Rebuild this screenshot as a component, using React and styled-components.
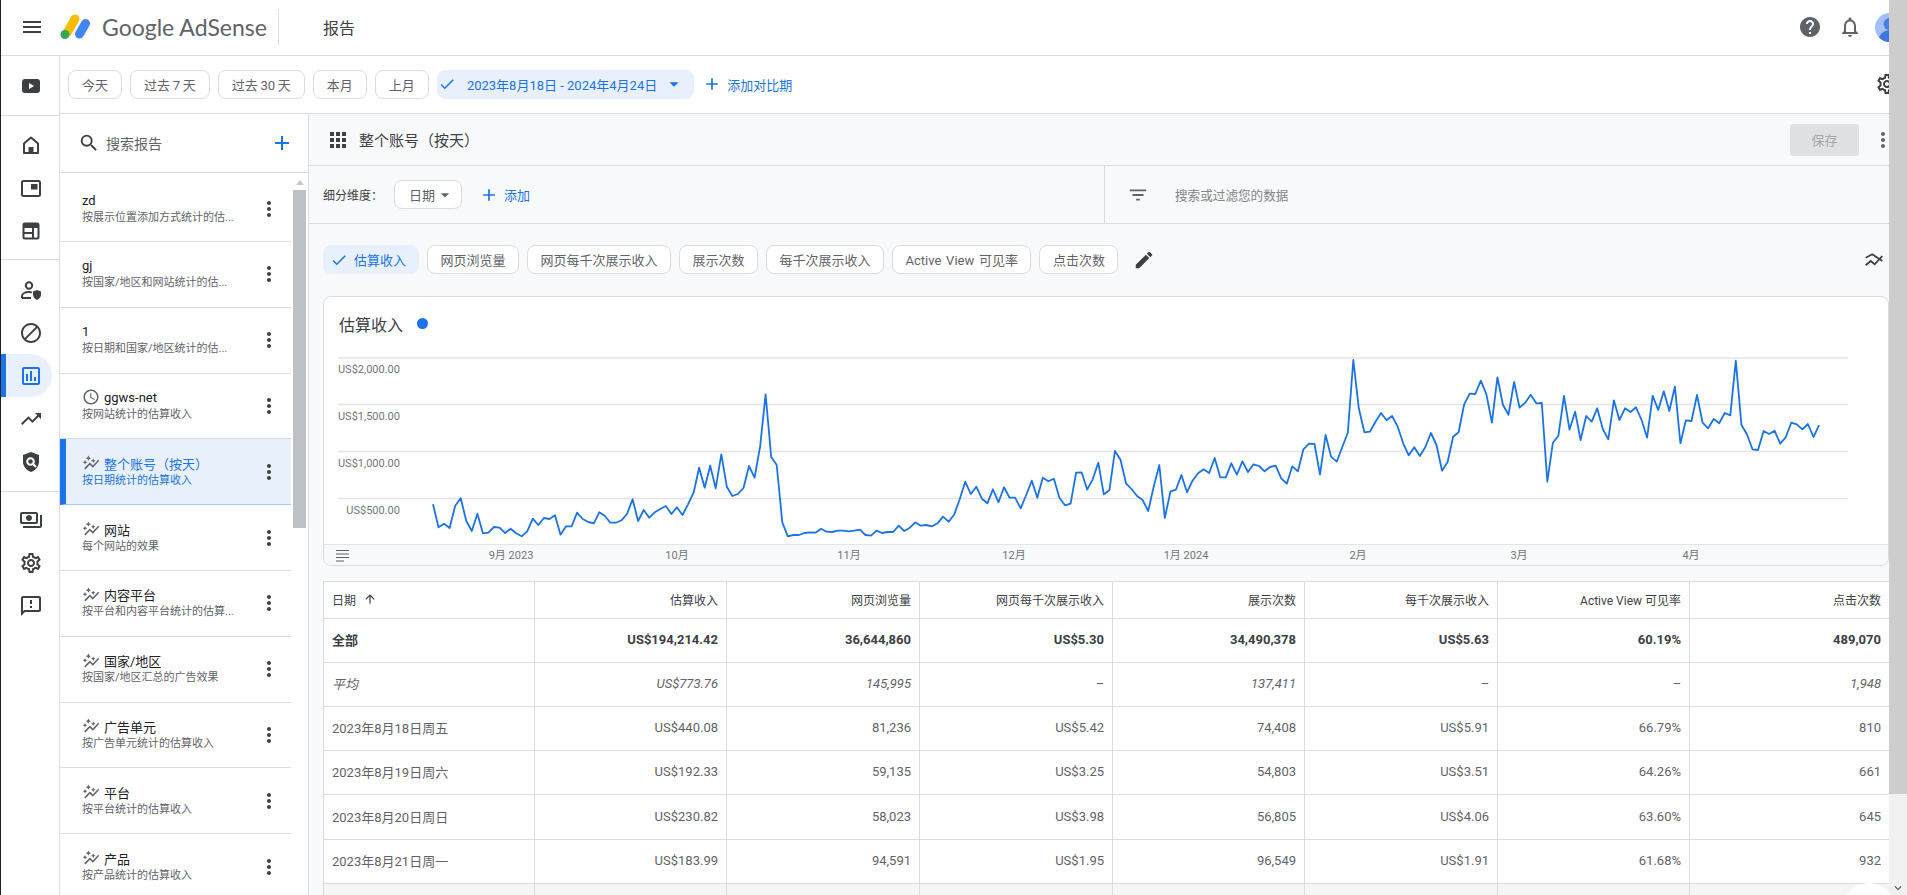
import styled, { createGlobalStyle } from 'styled-components';
import {
  MdMenu, MdHelp, MdNotificationsNone, MdOutlineBlock, MdOutlineAssessment, MdTrendingUp,
  MdOutlinePayments, MdOutlineSettings, MdOutlineFeedback, MdSearch, MdAdd, MdCheck, MdArrowDropDown,
  MdMoreVert, MdFilterList, MdCreate, MdOutlineSchedule, MdAutoGraph, MdApps, MdArrowUpward, MdKeyboardArrowDown,
} from 'react-icons/md';

const GlobalStyle = createGlobalStyle`
  html, body {
    margin: 0;
    height: 100%;
    overflow: hidden;
    background: #fff;
    font-family: Roboto, "Noto Sans CJK SC", sans-serif;
    color: #3c4043;
  }
  * { box-sizing: border-box; }
`;

const Page = styled.div`
  display: flex;
  height: 895px;
  border-left: 1px solid #202124;
  position: relative;
  overflow: hidden;
`;
const Viewport = styled.div`
  width: 1888px;
  overflow: hidden;
`;
const Frame = styled.div`
  width: 1906px;
  display: flex;
  flex-direction: column;
`;
const PageScroll = styled.div`
  width: 18px;
  flex: none;
  background: #f1f1f1;
  display: flex;
  flex-direction: column;
  justify-content: space-between;
  align-items: center;
  color: #505050;
`;
const PageThumb = styled.div`
  width: 100%;
  height: 794px;
  background: #cdcdcd;
`;
const Fab = styled.div`
  position: absolute;
  right: 12px;
  bottom: -40px;
  width: 52px;
  height: 52px;
  border-radius: 50%;
  background: #fff;
`;

/* top bar */
const TopBar = styled.header`
  height: 56px;
  flex: none;
  display: flex;
  align-items: center;
  padding: 0 3px 1px 19px;
  border-bottom: 1px solid #dadce0;
  color: #3c4043;
`;
const LogoBox = styled.div`
  display: flex;
  margin-left: 16px;
`;
const Wordmark = styled.div`
  margin-left: 11px;
  font-family: Lato, Roboto, sans-serif;
  font-size: 23px;
  color: #5f6368;
  white-space: nowrap;
  width: 156px;
`;
const TopDivider = styled.div`
  width: 1px;
  height: 36px;
  margin: 0 44px 0 20px;
  background: #dadce0;
`;
const PageTitle = styled.div`
  font-size: 16px;
  color: #3c4043;
`;
const TopIcons = styled.div`
  margin-left: auto;
  display: flex;
  align-items: center;
  gap: 16px;
  color: #5f6368;
`;
const AvatarBox = styled.div`
  display: flex;
  margin-left: -3px;
`;

/* left rail */
const Body = styled.div`
  display: flex;
  height: 839px;
`;
const Rail = styled.nav`
  width: 59px;
  flex: none;
  border-right: 1px solid #dadce0;
`;
const RailGroup = styled.div`
  padding: ${(p) => p.$pad};
  border-bottom: ${(p) => (p.$last ? 'none' : '1px solid #dadce0')};
`;
const RailItem = styled.div`
  width: 51px;
  height: ${(p) => p.$h || 43}px;
  display: flex;
  align-items: center;
  padding-left: 18px;
  color: ${(p) => (p.$active ? '#1a73e8' : '#3c4043')};
  background: ${(p) => (p.$active ? '#e8f0fe' : 'transparent')};
  border-radius: 0 22px 22px 0;
  box-shadow: ${(p) => (p.$active ? 'inset 5px 0 0 #1a73e8' : 'none')};
`;

const Content = styled.div`
  flex: 1;
  min-width: 0;
  display: flex;
  flex-direction: column;
`;
const Toolbar = styled.div`
  height: 58px;
  flex: none;
  display: flex;
  align-items: center;
  gap: 8px;
  padding: 0 8px 1px 8px;
  border-bottom: 1px solid #dadce0;
`;
const Chip = styled.div`
  height: 29px;
  flex: none;
  display: inline-flex;
  align-items: center;
  padding: 0 13px;
  border: 1px solid ${(p) => (p.$active ? '#e8f0fe' : '#dadce0')};
  border-radius: 8px;
  background: ${(p) => (p.$active ? '#e8f0fe' : '#fff')};
  color: ${(p) => (p.$active ? '#1a73e8' : '#5f6368')};
  font-size: 13px;
  white-space: nowrap;
  word-spacing: -0.5px;
  svg { flex: none; }
`;
const CheckChip = styled(Chip)`
  padding: 0 12px 0 6px;
  gap: 6px;
`;
const DateChip = styled(Chip)`
  padding: 0 8px 0 0;
  gap: 11px;
  word-spacing: 0;
  svg:last-child { margin-left: -5px; }
`;
const LinkButton = styled.div`
  display: inline-flex;
  align-items: center;
  gap: 5px;
  margin-left: ${(p) => p.$left || 0}px;
  color: #1a73e8;
  font-size: 13px;
  white-space: nowrap;
`;
const RightIcon = styled.div`
  margin-left: auto;
  display: flex;
  color: #3c4043;
`;

const Columns = styled.div`
  flex: 1;
  min-height: 0;
  display: flex;
`;

/* saved report list */
const Panel = styled.aside`
  width: 249px;
  flex: none;
  border-right: 1px solid #dadce0;
  display: flex;
  flex-direction: column;
  overflow: hidden;
`;
const PanelSearch = styled.div`
  height: 59px;
  flex: none;
  display: flex;
  align-items: center;
  padding: 0 14px 0 18px;
  gap: 6px;
  border-bottom: 1px solid #dadce0;
  color: #3c4043;
`;
const SearchText = styled.span`
  flex: 1;
  font-size: 14px;
  color: #5f6368;
`;
const PanelBody = styled.div`
  flex: 1;
  min-height: 0;
  display: flex;
`;
const ReportList = styled.div`
  width: 231px;
  flex: none;
  padding-top: 3.2px;
`;
const ReportRow = styled.div`
  height: 65.8px;
  display: flex;
  align-items: center;
  padding-left: ${(p) => (p.$active ? 16 : 22)}px;
  padding-right: 10px;
  background: ${(p) => (p.$active ? '#e8f0fb' : '#fff')};
  border-left: ${(p) => (p.$active ? '6px solid #1a73e8' : 'none')};
  border-bottom: 1px solid ${(p) => (p.$active ? '#a8c7fa' : '#dadce0')};
  color: ${(p) => (p.$active ? '#1a73e8' : '#3c4043')};
`;
const ReportText = styled.div`
  flex: 1;
  min-width: 0;
`;
const ReportTitle = styled.div`
  display: flex;
  align-items: center;
  gap: 4px;
  height: 17px;
  margin: -1px 0 1px;
  font-size: 13px;
  color: ${(p) => (p.$active ? '#1a73e8' : '#202124')};
  svg { color: #5f6368; flex: none; }
`;
const ReportSub = styled.div`
  font-size: 11px;
  line-height: 15px;
  color: ${(p) => (p.$active ? '#1a73e8' : '#5f6368')};
  white-space: nowrap;
`;
const ListTrack = styled.div`
  flex: 1;
  padding: 7px 2px 0;
`;
const UpArrow = styled.div`
  width: 0;
  height: 0;
  margin: 0 auto 5px;
  border: 4px solid transparent;
  border-top: none;
  border-bottom: 5px solid #c4c7cb;
`;
const ListThumb = styled.div`
  width: 13px;
  height: 338px;
  background: #bdc1c6;
`;

/* report area */
const Main = styled.main`
  flex: 1;
  min-width: 0;
  background: #f8f9fa;
  display: flex;
  flex-direction: column;
`;
const ReportHeader = styled.div`
  height: 52px;
  flex: none;
  display: flex;
  align-items: center;
  padding: 0 12px 0 17px;
  border-bottom: 1px solid #dadce0;
  color: #3c4043;
`;
const ReportName = styled.h1`
  margin: 0 0 0 9px;
  font-size: 15px;
  font-weight: 400;
  color: #3c4043;
`;
const SaveButton = styled.div`
  margin-left: auto;
  width: 69px;
  height: 32px;
  display: flex;
  align-items: center;
  justify-content: center;
  margin-right: 12px;
  border-radius: 3px;
  background: #e0e1e3;
  color: #a4a6a9;
  font-size: 13px;
`;
const FilterRow = styled.div`
  height: 58px;
  flex: none;
  display: flex;
  border-bottom: 1px solid #dadce0;
`;
const BreakdownCell = styled.div`
  width: 796px;
  flex: none;
  display: flex;
  align-items: center;
  padding-left: 14px;
  border-right: 1px solid #dadce0;
`;
const BreakdownLabel = styled.span`
  width: 71px;
  font-size: 12px;
  color: #3c4043;
`;
const DateSelect = styled(Chip)`
  width: 68px;
  padding: 0 6px 0 14px;
  justify-content: space-between;
  svg { color: #5f6368; }
`;
const FilterCell = styled.div`
  flex: 1;
  display: flex;
  align-items: center;
  padding-left: 22px;
  gap: 26px;
  color: #5f6368;
`;
const FilterHint = styled.span`
  font-size: 12.6px;
  color: #80868b;
`;
const MetricRow = styled.div`
  height: 72px;
  flex: none;
  display: flex;
  align-items: center;
  gap: 8px;
  padding: 0 21px 1px 14px;
`;
const MetricChip = styled(Chip)`
  padding: 0 12.5px;
  word-spacing: 1.5px;
  background: #fff;
`;
const Spacer = styled.div`
  flex: 1;
`;
const PencilBox = styled.div`
  display: flex;
  margin-left: 7px;
  color: #3c4043;
`;

const ChartCard = styled.section`
  height: 270px;
  flex: none;
  margin: 0 18px 0 14px;
  background: #fff;
  border: 1px solid #dadce0;
  border-radius: 8px;
  overflow: hidden;
`;
const ChartHead = styled.div`
  height: 49px;
  display: flex;
  align-items: center;
  gap: 14px;
  padding: 4px 0 0 15px;
  font-size: 16px;
  color: #3c4043;
`;
const ChartDot = styled.span`
  width: 11px;
  height: 11px;
  border-radius: 50%;
  background: #1a73e8;
`;
const ChartSvg = styled.svg`
  display: block;
  width: 1564px;
  height: 219px;
  text { font-family: Roboto, "Noto Sans CJK SC", sans-serif; font-size: 11px; fill: #70757a; }
`;

/* table */
const Table = styled.div`
  margin: 15px 18px 0 14px;
  background: #fff;
  border-top: 1px solid #dadce0;
  border-left: 1px solid #dadce0;
`;
const Row = styled.div`
  height: ${(p) => p.$h || 44}px;
  display: grid;
  grid-template-columns: 211px 192px 193px 193px 192px 193px 192px 1fr;
  border-bottom: 1px solid #dadce0;
  background: ${(p) => p.$bg || '#fff'};
  font-size: ${(p) => (p.$head ? 12 : 13)}px;
  font-weight: ${(p) => (p.$bold ? 700 : 400)};
  font-style: ${(p) => (p.$italic ? 'italic' : 'normal')};
  color: ${(p) => (p.$bold || p.$head ? '#3c4043' : '#5f6368')};
`;
const Cell = styled.div`
  display: flex;
  align-items: center;
  justify-content: flex-end;
  padding: 0 8px 2px;
  border-right: 1px solid #dadce0;
  white-space: nowrap;
  &:first-child { justify-content: flex-start; gap: 7px; }
  &:last-child { border-right: none; }
`;

/* drawn icons: the packages have no close match for these */
const Logo = () => (
  <svg width="31" height="26" viewBox="0 0 31 26">
    <line x1="15" y1="5" x2="7.5" y2="18" stroke="#fbbc04" strokeWidth="9" strokeLinecap="round" />
    <line x1="25.5" y1="9.5" x2="19.5" y2="20" stroke="#4285f4" strokeWidth="9" strokeLinecap="round" />
    <circle cx="5" cy="20.5" r="4.5" fill="#34a853" />
  </svg>
);
const Avatar = () => (
  <svg width="29" height="29" viewBox="0 0 29 29">
    <defs><clipPath id="av"><circle cx="14.5" cy="14.5" r="14.5" /></clipPath></defs>
    <g clipPath="url(#av)">
      <rect width="29" height="29" fill="#a3c0f8" />
      <circle cx="14.5" cy="11" r="6" fill="#4a7fe3" />
      <circle cx="14.5" cy="28" r="11" fill="#3f76de" />
    </g>
  </svg>
);
const PlayIcon = () => (
  <svg width="24" height="24" viewBox="0 0 24 24">
    <rect x="3" y="5" width="18" height="14" rx="3" fill="#3c4043" />
    <path d="M10 9l5 3-5 3z" fill="#fff" />
  </svg>
);
const HomeIcon = () => (
  <svg width="24" height="24" viewBox="0 0 24 24" fill="none">
    <path d="M12 4.500l-7 6V20h14v-9.500z" stroke="currentColor" strokeWidth="2" strokeLinejoin="round" />
    <rect x="9.500" y="14" width="5" height="6" fill="currentColor" />
  </svg>
);
const AdUnitIcon = () => (
  <svg width="24" height="24" viewBox="0 0 24 24" fill="none">
    <rect x="3" y="5" width="18" height="15" rx="1.500" stroke="currentColor" strokeWidth="2" />
    <rect x="12" y="8" width="6.500" height="5.500" fill="currentColor" />
  </svg>
);
const LayoutIcon = () => (
  <svg width="24" height="24" viewBox="0 0 24 24" fill="none">
    <rect x="4.500" y="4.500" width="15" height="15" rx="1.500" stroke="currentColor" strokeWidth="2" />
    <rect x="4.500" y="4.500" width="15" height="4.500" fill="currentColor" />
    <path d="M4.500 14h10M14 9v10.500" stroke="currentColor" strokeWidth="2" />
  </svg>
);
const AccountIcon = () => (
  <svg width="24" height="24" viewBox="0 0 24 24" fill="none">
    <circle cx="10" cy="7.500" r="3.200" stroke="currentColor" strokeWidth="2" />
    <path d="M3 20v-2c0-2.500 3.500-4 7-4 1 0 2 .1 3 .4M3 20h9" stroke="currentColor" strokeWidth="2" />
    <path d="M18 12l4 1.500v3c0 2.500-1.700 4.500-4 5.500-2.300-1-4-3-4-5.500v-3z" fill="currentColor" />
  </svg>
);
const ShieldIcon = () => (
  <svg width="24" height="24" viewBox="0 0 24 24" fill="none">
    <path d="M12 2l8 3v6.500c0 5-3.400 9-8 10.500-4.600-1.500-8-5.500-8-10.500V5z" fill="currentColor" />
    <circle cx="11.500" cy="11.500" r="3.300" stroke="#fff" strokeWidth="2" />
    <path d="M14 14l3 3" stroke="#fff" strokeWidth="2" />
  </svg>
);
const CompareIcon = () => (
  <svg width="24" height="24" viewBox="0 0 24 24" fill="none" stroke="#3c4043" strokeWidth="1.800">
    <path d="M3.700 9.700l6.600-3.400 10 6.700" />
    <path d="M3.700 17.300l5-4.300 4 3.300L20.300 8" />
  </svg>
);

const quickRanges = ['今天', '过去 7 天', '过去 30 天', '本月', '上月'];
const metrics = ['网页浏览量', '网页每千次展示收入', '展示次数', '每千次展示收入', 'Active View 可见率', '点击次数'];

const reports = [
  { title: 'zd', sub: '按展示位置添加方式统计的估...' },
  { title: 'gj', sub: '按国家/地区和网站统计的估...' },
  { title: '1', sub: '按日期和国家/地区统计的估...' },
  { title: 'ggws-net', sub: '按网站统计的估算收入', icon: 'clock' },
  { title: '整个账号（按天）', sub: '按日期统计的估算收入', icon: 'auto', active: true },
  { title: '网站', sub: '每个网站的效果', icon: 'auto' },
  { title: '内容平台', sub: '按平台和内容平台统计的估算...', icon: 'auto' },
  { title: '国家/地区', sub: '按国家/地区汇总的广告效果', icon: 'auto' },
  { title: '广告单元', sub: '按广告单元统计的估算收入', icon: 'auto' },
  { title: '平台', sub: '按平台统计的估算收入', icon: 'auto' },
  { title: '产品', sub: '按产品统计的估算收入', icon: 'auto' },
];

const tableHead = ['估算收入', '网页浏览量', '网页每千次展示收入', '展示次数', '每千次展示收入', 'Active View 可见率', '点击次数'];
const totals = ['全部', 'US$194,214.42', '36,644,860', 'US$5.30', '34,490,378', 'US$5.63', '60.19%', '489,070'];
const averages = ['平均', 'US$773.76', '145,995', '–', '137,411', '–', '–', '1,948'];
const days = [
  ['2023年8月18日周五', 'US$440.08', '81,236', 'US$5.42', '74,408', 'US$5.91', '66.79%', '810'],
  ['2023年8月19日周六', 'US$192.33', '59,135', 'US$3.25', '54,803', 'US$3.51', '64.26%', '661'],
  ['2023年8月20日周日', 'US$230.82', '58,023', 'US$3.98', '56,805', 'US$4.06', '63.60%', '645'],
  ['2023年8月21日周一', 'US$183.99', '94,591', 'US$1.95', '96,549', 'US$1.91', '61.68%', '932'],
];

// daily values, as pixel heights read off the chart
const series = [
  583, 652, 641, 654, 587, 565, 633, 663, 611, 670, 668, 651, 653, 669, 656, 670, 679, 664, 626, 645, 624, 627, 616, 674,
  649, 649, 608, 627, 636, 640, 607, 618, 638, 638, 631, 612, 568, 633, 600, 623, 607, 597, 588, 612, 592, 615, 583, 548,
  473, 533, 467, 535, 433, 530, 558, 552, 534, 468, 503, 410, 253, 441, 465, 637, 679, 675, 675, 669, 667, 668, 656, 665,
  666, 662, 662, 664, 662, 659, 675, 677, 662, 669, 666, 666, 647, 663, 653, 637, 647, 645, 649, 640, 620, 635, 614, 568,
  515, 552, 530, 566, 580, 538, 577, 532, 563, 563, 595, 555, 512, 563, 503, 514, 506, 564, 586, 581, 488, 487, 539, 508,
  458, 553, 541, 423, 449, 520, 537, 558, 570, 603, 530, 465, 624, 545, 539, 495, 547, 512, 490, 478, 489, 444, 502, 502,
  460, 494, 454, 486, 463, 468, 484, 471, 467, 505, 521, 469, 484, 418, 401, 402, 494, 375, 440, 455, 412, 368, 150, 295,
  367, 365, 335, 309, 331, 318, 350, 400, 436, 412, 438, 411, 369, 405, 482, 456, 380, 367, 283, 251, 252, 212, 253, 338,
  202, 285, 314, 216, 293, 278, 254, 280, 279, 515, 398, 377, 258, 359, 305, 390, 318, 335, 295, 357, 388, 271, 330, 295,
  306, 292, 330, 383, 257, 300, 244, 303, 230, 400, 331, 333, 255, 338, 355, 327, 340, 309, 316, 152, 344, 373, 418, 420,
  363, 372, 362, 401, 382, 338, 343, 358, 342, 381, 345,
];
const linePoints = series
  .map((v, i) => `${(433 + (i * 1386) / (series.length - 1)).toFixed(1)},${(310 + v / 3).toFixed(1)}`)
  .join(' ');

const gridLines = [
  { y: 358, label: 'US$2,000.00' },
  { y: 404.5, label: 'US$1,500.00' },
  { y: 451.5, label: 'US$1,000.00' },
  { y: 498.5, label: 'US$500.00' },
];
const months = [
  ['9月 2023', 511], ['10月', 677], ['11月', 849], ['12月', 1014],
  ['1月 2024', 1186], ['2月', 1358], ['3月', 1519], ['4月', 1691],
];

const EarningsChart = () => (
  <ChartSvg viewBox="324 346 1564 219">
    {gridLines.map((g) => (
      <g key={g.y}>
        <line x1="338" x2="1848" y1={g.y} y2={g.y} stroke="#e3e4e6" strokeWidth="1.500" />
        <text x="400" y={g.y + 15} textAnchor="end">{g.label}</text>
      </g>
    ))}
    <polyline points={linePoints} fill="none" stroke="#1a73e8" strokeWidth="1.800" strokeLinejoin="round" />
    <rect x="324" y="544" width="1564" height="21" fill="#f8f9fa" />
    <line x1="324" x2="1888" y1="544.500" y2="544.500" stroke="#e3e4e6" />
    <path d="M336 550.500h13M336 554h13M336 557.500h13M336 561h8" stroke="#5f6368" strokeWidth="1.200" fill="none" />
    {months.map(([label, x]) => (
      <text key={label} x={x} y="559" textAnchor="middle">{label}</text>
    ))}
  </ChartSvg>
);

const App = () => (
  <>
    <GlobalStyle />
    <Page>
      <Viewport>
        <Frame>
          <TopBar>
            <MdMenu size={24} />
            <LogoBox><Logo /></LogoBox>
            <Wordmark>Google AdSense</Wordmark>
            <TopDivider />
            <PageTitle>报告</PageTitle>
            <TopIcons>
              <MdHelp size={24} />
              <MdNotificationsNone size={24} />
              <AvatarBox><Avatar /></AvatarBox>
            </TopIcons>
          </TopBar>
          <Body>
            <Rail>
              <RailGroup $pad="18px 0 17px"><RailItem $h={24}><PlayIcon /></RailItem></RailGroup>
              <RailGroup $pad="7px 0">
                <RailItem><HomeIcon /></RailItem>
                <RailItem><AdUnitIcon /></RailItem>
                <RailItem><LayoutIcon /></RailItem>
              </RailGroup>
              <RailGroup $pad="8px 0">
                <RailItem><AccountIcon /></RailItem>
                <RailItem><MdOutlineBlock size={24} /></RailItem>
                <RailItem $active><MdOutlineAssessment size={24} /></RailItem>
                <RailItem><MdTrendingUp size={24} /></RailItem>
                <RailItem><ShieldIcon /></RailItem>
              </RailGroup>
              <RailGroup $pad="6px 0" $last>
                <RailItem><MdOutlinePayments size={24} /></RailItem>
                <RailItem><MdOutlineSettings size={24} /></RailItem>
                <RailItem><MdOutlineFeedback size={24} /></RailItem>
              </RailGroup>
            </Rail>
            <Content>
              <Toolbar>
                {quickRanges.map((r) => <Chip key={r}>{r}</Chip>)}
                <DateChip $active>
                  <MdCheck size={18} />
                  2023年8月18日 - 2024年4月24日
                  <MdArrowDropDown size={22} />
                </DateChip>
                <LinkButton><MdAdd size={20} />添加对比期</LinkButton>
                <RightIcon><MdOutlineSettings size={24} /></RightIcon>
              </Toolbar>
              <Columns>
                <Panel>
                  <PanelSearch>
                    <MdSearch size={22} />
                    <SearchText>搜索报告</SearchText>
                    <MdAdd size={24} color="#1a73e8" />
                  </PanelSearch>
                  <PanelBody>
                    <ReportList>
                      {reports.map((r) => (
                        <ReportRow key={r.title} $active={r.active}>
                          <ReportText>
                            <ReportTitle $active={r.active}>
                              {r.icon === 'clock' && <MdOutlineSchedule size={18} />}
                              {r.icon === 'auto' && <MdAutoGraph size={18} />}
                              {r.title}
                            </ReportTitle>
                            <ReportSub $active={r.active}>{r.sub}</ReportSub>
                          </ReportText>
                          <MdMoreVert size={24} color="#3c4043" />
                        </ReportRow>
                      ))}
                    </ReportList>
                    <ListTrack>
                      <UpArrow />
                      <ListThumb />
                    </ListTrack>
                  </PanelBody>
                </Panel>
                <Main>
                  <ReportHeader>
                    <MdApps size={24} />
                    <ReportName>整个账号（按天）</ReportName>
                    <SaveButton>保存</SaveButton>
                    <MdMoreVert size={24} color="#5f6368" />
                  </ReportHeader>
                  <FilterRow>
                    <BreakdownCell>
                      <BreakdownLabel>细分维度：</BreakdownLabel>
                      <DateSelect>日期<MdArrowDropDown size={20} /></DateSelect>
                      <LinkButton $left={17}><MdAdd size={20} />添加</LinkButton>
                    </BreakdownCell>
                    <FilterCell>
                      <MdFilterList size={22} />
                      <FilterHint>搜索或过滤您的数据</FilterHint>
                    </FilterCell>
                  </FilterRow>
                  <MetricRow>
                    <CheckChip $active><MdCheck size={18} />估算收入</CheckChip>
                    {metrics.map((m) => <MetricChip key={m}>{m}</MetricChip>)}
                    <PencilBox><MdCreate size={22} /></PencilBox>
                    <Spacer />
                    <CompareIcon />
                  </MetricRow>
                  <ChartCard>
                    <ChartHead>估算收入<ChartDot /></ChartHead>
                    <EarningsChart />
                  </ChartCard>
                  <Table>
                    <Row $h={37} $head>
                      <Cell>日期<MdArrowUpward size={14} /></Cell>
                      {tableHead.map((h) => <Cell key={h}>{h}</Cell>)}
                    </Row>
                    <Row $bold>{totals.map((v, i) => <Cell key={i}>{v}</Cell>)}</Row>
                    <Row $italic>{averages.map((v, i) => <Cell key={i}>{v}</Cell>)}</Row>
                    {days.map((d, n) => (
                      <Row key={d[0]} $h={n === 2 ? 45 : 44}>{d.map((v, i) => <Cell key={i}>{v}</Cell>)}</Row>
                    ))}
                    <Row $bg="#f5f5f5">{totals.map((v, i) => <Cell key={i} />)}</Row>
                  </Table>
                </Main>
              </Columns>
            </Content>
          </Body>
        </Frame>
      </Viewport>
      <PageScroll>
        <PageThumb />
        <MdKeyboardArrowDown size={14} />
      </PageScroll>
      <Fab />
    </Page>
  </>
);

export default App;
